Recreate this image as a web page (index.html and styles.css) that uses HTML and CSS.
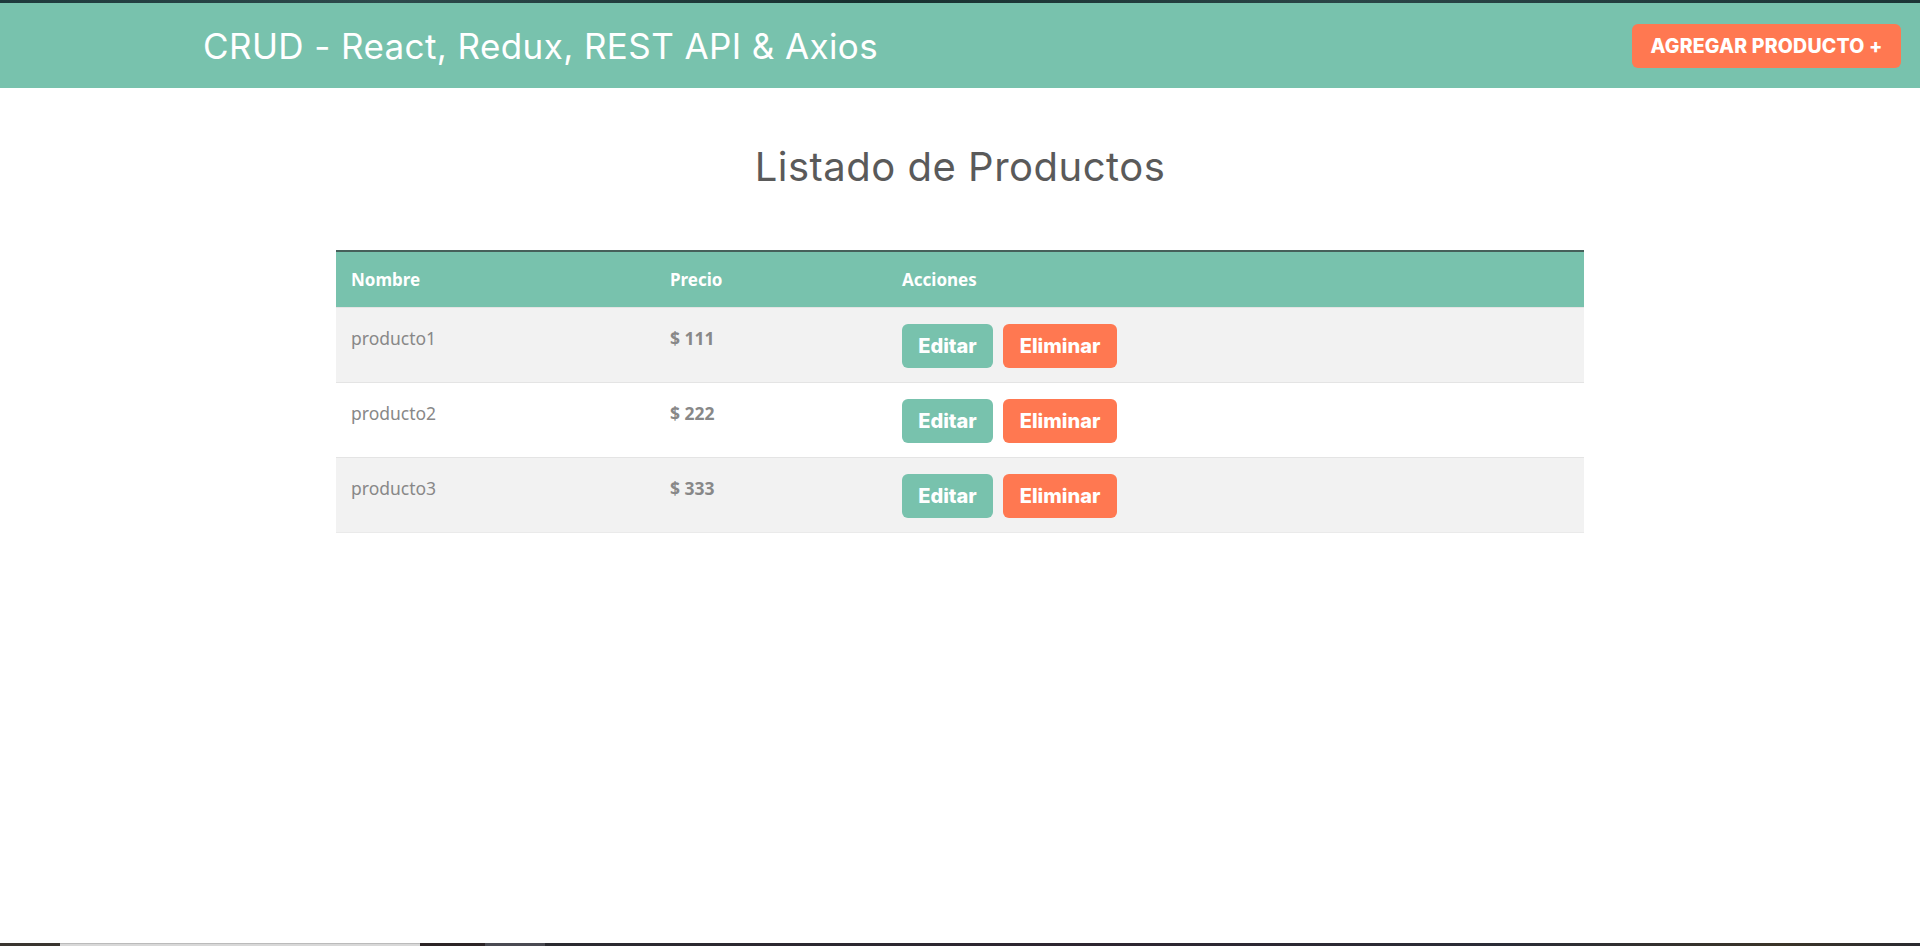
FILE: index.html
```html
<!DOCTYPE html>
<html lang="es">
<head>
<meta charset="utf-8">
<title>CRUD - React, Redux, REST API &amp; Axios</title>
<link rel="stylesheet" href="styles.css">
</head>
<body>
<div class="top-strip"></div>
<header class="navbar">
  <h1 class="brand">CRUD - React, Redux, REST API &amp; Axios</h1>
  <a class="btn btn-danger btn-add" href="#">Agregar Producto +</a>
</header>
<main class="main">
  <h2 class="page-title">Listado de Productos</h2>
  <table class="table">
    <colgroup>
      <col class="col-name">
      <col class="col-price">
      <col class="col-actions">
    </colgroup>
    <thead>
      <tr><th>Nombre</th><th>Precio</th><th>Acciones</th></tr>
    </thead>
    <tbody>
      <tr class="striped">
        <td>producto1</td>
        <td class="price">$ 111</td>
        <td><div class="actions"><a class="btn btn-primary btn-edit" href="#">Editar</a><button class="btn btn-danger btn-del">Eliminar</button></div></td>
      </tr>
      <tr>
        <td>producto2</td>
        <td class="price">$ 222</td>
        <td><div class="actions"><a class="btn btn-primary btn-edit" href="#">Editar</a><button class="btn btn-danger btn-del">Eliminar</button></div></td>
      </tr>
      <tr class="striped">
        <td>producto3</td>
        <td class="price">$ 333</td>
        <td><div class="actions"><a class="btn btn-primary btn-edit" href="#">Editar</a><button class="btn btn-danger btn-del">Eliminar</button></div></td>
      </tr>
    </tbody>
  </table>
</main>
<div class="taskbar">
  <span class="tb-a"></span><span class="tb-b"></span><span class="tb-c"></span><span class="tb-d"></span><span class="tb-e"></span>
</div>
</body>
</html>
```

FILE: styles.css
```css
* { box-sizing: border-box; }
html, body { margin: 0; padding: 0; height: 100%; }
body {
  display: flex;
  flex-direction: column;
  background: #fff;
  font-family: "Noto Sans", "Open Sans", sans-serif;
  color: #888;
  font-size: 17.5px;
}
.top-strip {
  height: 3px;
  flex: none;
  background: linear-gradient(90deg, #1e3a3c, #2d4a4c 20%, #17302f 45%, #2a4547 70%, #1c3536);
}
.navbar {
  flex: none;
  height: 85px;
  background: #78c2ad;
  display: flex;
  align-items: center;
  justify-content: space-between;
  padding: 0 19px 0 203px;
}
.brand {
  margin: 0;
  font-family: "Inter", sans-serif;
  font-weight: 400;
  font-size: 35px;
  color: #fff;
  letter-spacing: 0.4px;
}
.btn {
  display: flex;
  align-items: center;
  justify-content: center;
  font-family: "Inter", sans-serif;
  font-weight: 800;
  font-size: 20px;
  color: #fff;
  text-decoration: none;
  border: none;
  border-radius: 6px;
  padding: 0;
  cursor: pointer;
}
.btn-primary { background: #78c2ad; }
.btn-danger { background: #ff7851; }
.btn-add {
  text-transform: uppercase;
  width: 269px;
  height: 44px;
  font-size: 19.5px;
  letter-spacing: 0.2px;
}
.main {
  flex: 1;
  display: flex;
  flex-direction: column;
  align-items: center;
}
.page-title {
  margin: 55px 0 59px;
  font-family: "Inter", sans-serif;
  font-weight: 400;
  font-size: 40px;
  line-height: 48px;
  color: #5a5a5a;
  letter-spacing: 0.5px;
}
.table {
  width: 1248px;
  border-collapse: collapse;
  border-top: 2px solid #46605a;
}
.col-name { width: 319px; }
.col-price { width: 232px; }
.table th {
  background: #78c2ad;
  color: #fff;
  text-align: left;
  font-weight: 700;
  font-size: 17px;
  line-height: 26px;
  padding: 15px 15px 14px;
}
.table td {
  vertical-align: top;
  padding: 16px 15px 14px;
  line-height: 28px;
  border-top: 1px solid #e4e4e4;
}
.table tr.striped td { background: #f2f2f2; }
.table tbody tr:last-child td { border-bottom: 1px solid #eaeaea; }
.price { font-weight: 700; }
.actions { display: flex; gap: 10px; }
.btn-edit { width: 91px; height: 44px; }
.btn-del { width: 114px; height: 44px; }
.taskbar {
  flex: none;
  height: 3px;
  display: flex;
  background: #2a2a30;
}
.taskbar span { display: block; height: 100%; }
.tb-a { width: 60px; background: #3a3530; }
.tb-b { width: 360px; background: #d8d8d8; border-top: 1px solid #bbb; }
.tb-c { width: 65px; background: #2c2426; }
.tb-d { width: 60px; background: #4a4a52; }
.tb-e { flex: 1; background: linear-gradient(90deg, #2a2a30, #2d2530 40%, #2a2c36 70%, #3a3428 90%, #2a2a30); }
```
